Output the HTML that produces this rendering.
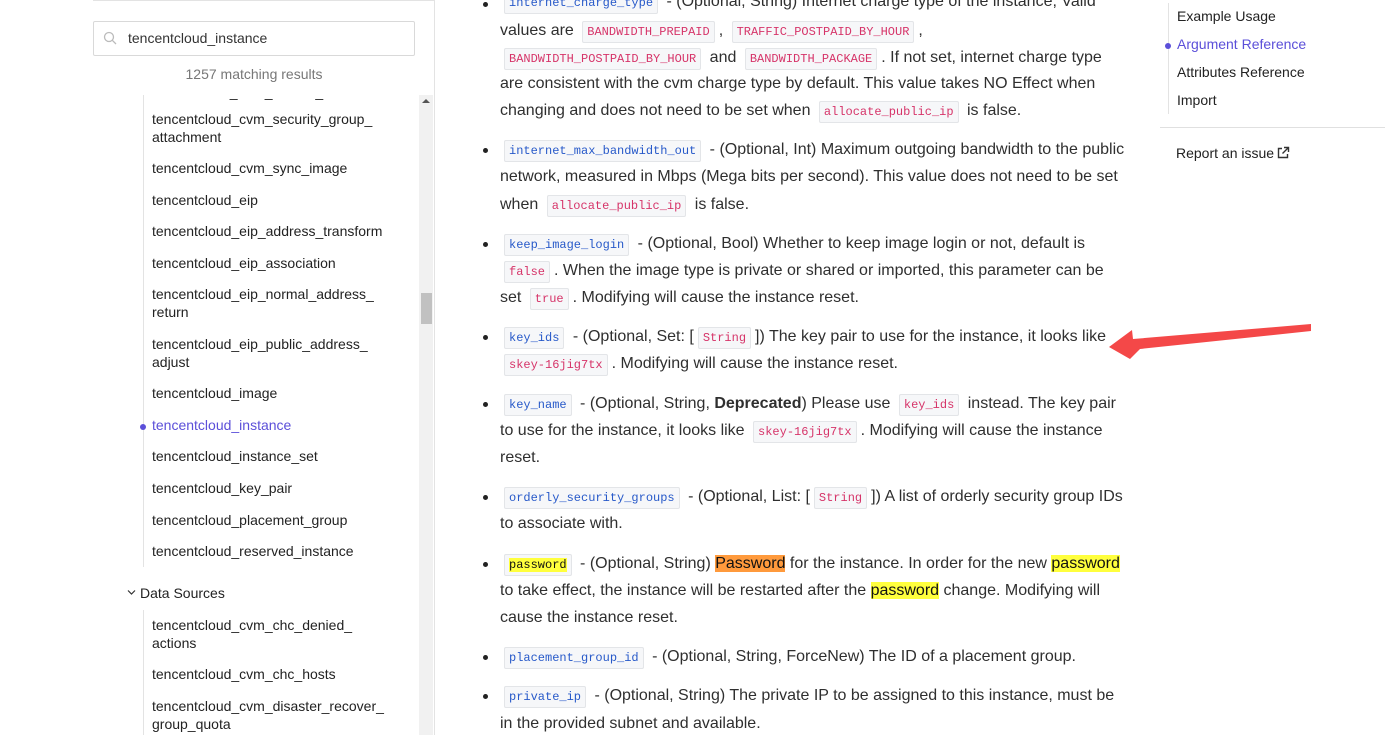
<!DOCTYPE html>
<html><head><meta charset="utf-8"><style>
body{margin:0;width:1385px;height:735px;overflow:hidden;background:#fff;font-family:"Liberation Sans",sans-serif;color:#2b2b2b;position:relative}
.a{position:absolute;white-space:nowrap}
.m{position:absolute;left:0;top:2px;width:1385px;height:735px}
.l{position:absolute;left:500px;font-size:16px;line-height:27px;height:27px;white-space:nowrap;color:#2f2f2f}
.b{position:absolute;left:483px;width:5px;height:5px;border-radius:50%;background:#222}
code{font-family:"Liberation Mono",monospace;font-size:12px;background:#f6f7f9;border:1px solid #e3e5e8;border-radius:2px;padding:3px 4px;margin:0 4px;color:#d63469}
code.n{color:#2759c9}
.s{position:absolute;left:152px;font-size:14px;line-height:18px;color:#222;white-space:nowrap}
.t{position:absolute;left:1177px;font-size:14px;color:#222;white-space:nowrap}
mark{background:#ffff3d;color:#111}
</style></head><body>
<!-- sidebar -->
<div class="a" style="left:93px;top:0;width:341px;height:1px;background:#e3e3e3"></div>
<div class="a" style="left:434px;top:0;width:1px;height:735px;background:#e3e3e3"></div>
<div class="a" style="left:93px;top:21px;width:320px;height:33px;border:1px solid #d9d9d9;border-radius:2px"></div>
<svg class="a" style="left:103px;top:31px" width="14" height="14" viewBox="0 0 14 14"><circle cx="6" cy="6" r="4.5" fill="none" stroke="#bbb" stroke-width="1.3"/><line x1="9.3" y1="9.3" x2="13" y2="13" stroke="#bbb" stroke-width="1.3"/></svg>
<div class="a" style="left:128px;top:30px;font-size:14px;color:#333">tencentcloud_instance</div>
<div class="a" style="left:93px;width:322px;text-align:center;top:66px;font-size:14px;color:#777">1257 matching results</div>
<div class="a" style="left:143px;top:95px;width:1px;height:472px;background:#e3e3e3"></div>
<div class="a" style="left:143px;top:610px;width:1px;height:125px;background:#e3e3e3"></div>
<div class="a" style="left:419px;top:95px;width:14px;height:640px;background:#f1f1f1"></div>
<div class="a" style="left:421px;top:293px;width:11px;height:31px;background:#c1c1c1"></div>
<div class="a" style="left:422px;top:99px;width:0;height:0;border-left:4px solid transparent;border-right:4px solid transparent;border-bottom:4px solid #555"></div>
<div class="s" style="top:83px;color:#222">&nbsp;&nbsp;&nbsp;&nbsp;&nbsp;&nbsp;&nbsp;&nbsp;&nbsp;&nbsp;&nbsp;&nbsp;&nbsp;&nbsp;&nbsp;&nbsp;&nbsp;&nbsp;&nbsp;&nbsp;_ &nbsp;&nbsp;&nbsp;&nbsp;&nbsp;&nbsp;_ &nbsp;&nbsp;&nbsp;&nbsp;&nbsp;&nbsp;&nbsp;&nbsp;&nbsp;&nbsp;_</div>
<div class="s" style="top:110px">tencentcloud_cvm_security_group_<br>attachment</div>
<div class="s" style="top:159px">tencentcloud_cvm_sync_image</div>
<div class="s" style="top:191px">tencentcloud_eip</div>
<div class="s" style="top:222px">tencentcloud_eip_address_transform</div>
<div class="s" style="top:254px">tencentcloud_eip_association</div>
<div class="s" style="top:285px">tencentcloud_eip_normal_address_<br>return</div>
<div class="s" style="top:335px">tencentcloud_eip_public_address_<br>adjust</div>
<div class="s" style="top:384px">tencentcloud_image</div>
<div class="a" style="left:140px;top:424px;width:6px;height:6px;border-radius:50%;background:#5b4fd9"></div>
<div class="s" style="top:416px;color:#5b4fd9">tencentcloud_instance</div>
<div class="s" style="top:447px">tencentcloud_instance_set</div>
<div class="s" style="top:479px">tencentcloud_key_pair</div>
<div class="s" style="top:511px">tencentcloud_placement_group</div>
<div class="s" style="top:542px">tencentcloud_reserved_instance</div>
<svg class="a" style="left:127px;top:589px" width="9" height="7" viewBox="0 0 9 7"><path d="M1 1.5L4.5 5L8 1.5" fill="none" stroke="#333" stroke-width="1.2"/></svg>
<div class="s" style="top:584px;left:140px">Data Sources</div>
<div class="s" style="top:616px">tencentcloud_cvm_chc_denied_<br>actions</div>
<div class="s" style="top:665px">tencentcloud_cvm_chc_hosts</div>
<div class="s" style="top:697px">tencentcloud_cvm_disaster_recover_<br>group_quota</div>
<!-- main -->
<div class="m">
<div class="b" style="top:0px"></div>
<div class="l" style="top:-14px"><code class="n">internet_charge_type</code> - (Optional, String) Internet charge type of the instance, Valid</div>
<div class="l" style="top:15px">values are <code>BANDWIDTH_PREPAID</code>, <code>TRAFFIC_POSTPAID_BY_HOUR</code>,</div>
<div class="l" style="top:42px;left:500px"><code style="margin-left:4px">BANDWIDTH_POSTPAID_BY_HOUR</code> and <code>BANDWIDTH_PACKAGE</code>. If not set, internet charge type</div>
<div class="l" style="top:68px">are consistent with the cvm charge type by default. This value takes NO Effect when</div>
<div class="l" style="top:95px">changing and does not need to be set when <code>allocate_public_ip</code> is false.</div>
<div class="b" style="top:146px"></div>
<div class="l" style="top:134px"><code class="n">internet_max_bandwidth_out</code> - (Optional, Int) Maximum outgoing bandwidth to the public</div>
<div class="l" style="top:161px">network, measured in Mbps (Mega bits per second). This value does not need to be set</div>
<div class="l" style="top:189px">when <code>allocate_public_ip</code> is false.</div>
<div class="b" style="top:240px"></div>
<div class="l" style="top:228px"><code class="n">keep_image_login</code> - (Optional, Bool) Whether to keep image login or not, default is</div>
<div class="l" style="top:255px"><code>false</code>. When the image type is private or shared or imported, this parameter can be</div>
<div class="l" style="top:282px">set <code>true</code>. Modifying will cause the instance reset.</div>
<div class="b" style="top:333px"></div>
<div class="l" style="top:321px"><code class="n">key_ids</code> - (Optional, Set: [<code>String</code>]) The key pair to use for the instance, it looks like</div>
<div class="l" style="top:348px"><code>skey-16jig7tx</code>. Modifying will cause the instance reset.</div>
<div class="b" style="top:400px"></div>
<div class="l" style="top:388px"><code class="n">key_name</code> - (Optional, String, <b>Deprecated</b>) Please use <code>key_ids</code> instead. The key pair</div>
<div class="l" style="top:415px">to use for the instance, it looks like <code>skey-16jig7tx</code>. Modifying will cause the instance</div>
<div class="l" style="top:442px">reset.</div>
<div class="b" style="top:493px"></div>
<div class="l" style="top:481px"><code class="n">orderly_security_groups</code> - (Optional, List: [<code>String</code>]) A list of orderly security group IDs</div>
<div class="l" style="top:508px">to associate with.</div>
<div class="b" style="top:560px"></div>
<div class="l" style="top:548px"><code class="n" style="color:#111"><mark>password</mark></code> - (Optional, String) <span style="background:#ff9a3c;color:#111">Password</span> for the instance. In order for the new <mark>password</mark></div>
<div class="l" style="top:575px">to take effect, the instance will be restarted after the <mark>password</mark> change. Modifying will</div>
<div class="l" style="top:602px">cause the instance reset.</div>
<div class="b" style="top:653px"></div>
<div class="l" style="top:641px"><code class="n">placement_group_id</code> - (Optional, String, ForceNew) The ID of a placement group.</div>
<div class="b" style="top:692px"></div>
<div class="l" style="top:680px"><code class="n">private_ip</code> - (Optional, String) The private IP to be assigned to this instance, must be</div>
<div class="l" style="top:708px">in the provided subnet and available.</div>
</div>
<!-- arrow -->
<svg class="a" style="left:1100px;top:317px" width="220" height="50" viewBox="0 0 220 50"><polygon points="211,7 211,14 40,32 30,42 9,30 32,13 33,22" fill="#f44848"/></svg>
<!-- toc -->
<div class="a" style="left:1168px;top:3px;width:1px;height:111px;background:#e3e3e3"></div>
<div class="t" style="top:8px">Example Usage</div>
<div class="a" style="left:1165px;top:43px;width:6px;height:6px;border-radius:50%;background:#5b4fd9"></div>
<div class="t" style="top:36px;color:#5b4fd9">Argument Reference</div>
<div class="t" style="top:64px">Attributes Reference</div>
<div class="t" style="top:92px">Import</div>
<div class="a" style="left:1160px;top:127px;width:225px;height:1px;background:#e0e0e0"></div>
<div class="t" style="top:145px;left:1176px">Report an issue</div>
<svg class="a" style="left:1276px;top:146px" width="14" height="14" viewBox="0 0 14 14"><path d="M6 2.5H2.5v9h9V8" fill="none" stroke="#333" stroke-width="1.4"/><path d="M8 1.5h4.5V6M12.5 1.5L6.5 7.5" fill="none" stroke="#333" stroke-width="1.4"/></svg>
</body></html>
